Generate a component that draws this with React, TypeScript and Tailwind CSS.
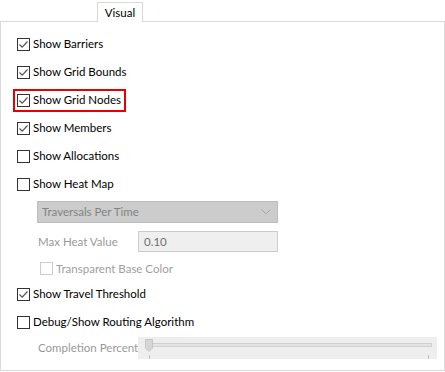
import type { ReactNode } from "react";

function Check({ checked, disabled }: { checked?: boolean; disabled?: boolean }) {
  return (
    <span
      className={`flex h-[13px] w-[13px] shrink-0 items-center justify-center border bg-white ${
        disabled ? "border-[#cccccc]" : "border-[#333333]"
      }`}
    >
      {checked && (
        <svg width="11" height="11" viewBox="0 0 11 11">
          <path d="M1.5 5.5 L4.2 8.2 L9.5 2.5" fill="none" stroke="#555555" strokeWidth="1.2" />
        </svg>
      )}
    </span>
  );
}

function CheckRow({
  label,
  checked,
  disabled,
  className = "",
}: {
  label: string;
  checked?: boolean;
  disabled?: boolean;
  className?: string;
}) {
  return (
    <div className={`flex items-center gap-[3px] ${className}`}>
      <Check checked={checked} disabled={disabled} />
      <span className={`whitespace-nowrap ${disabled ? "text-[#a0a0a0]" : "text-black"}`}>{label}</span>
    </div>
  );
}

function Row({ children, className = "" }: { children: ReactNode; className?: string }) {
  return <div className={`flex h-[28px] items-center ${className}`}>{children}</div>;
}

export default function App() {
  return (
    <div
      className="relative h-[372px] w-[445px] bg-white text-[11.5px] leading-none"
      style={{ fontFamily: 'Lato, "Noto Sans", sans-serif' }}
    >
      {/* tab strip */}
      <div className="flex h-[21px] items-end pl-[97px]">
        <div className="relative z-10 -mb-px flex h-[20px] w-[46px] items-center justify-center border border-b-0 border-[#d9d9d9] bg-white text-black">
          Visual
        </div>
      </div>

      <div className="h-[350px] border border-[#d9d9d9] pl-[16px] pr-[6px] pt-[8px]">
        <Row>
          <CheckRow label="Show Barriers" checked />
        </Row>
        <Row>
          <CheckRow label="Show Grid Bounds" checked />
        </Row>
        <Row>
          <div className="-ml-[4px] flex h-[23px] items-center border-2 border-[#e60000] pl-[2px] pr-[3px]">
            <CheckRow label="Show Grid Nodes" checked />
          </div>
        </Row>
        <Row>
          <CheckRow label="Show Members" checked />
        </Row>
        <Row>
          <CheckRow label="Show Allocations" />
        </Row>
        <Row>
          <CheckRow label="Show Heat Map" />
        </Row>

        <div className="ml-[20px] mt-[3px] flex h-[22px] w-[241px] items-center justify-between border border-[#bdbdbd] bg-[#cccccc] pl-[4px] pr-[6px] text-[#838383]">
          <span>Traversals Per Time</span>
          <svg width="10" height="6" viewBox="0 0 10 6">
            <path d="M0.5 0.5 L5 5 L9.5 0.5" fill="none" stroke="#a8a8a8" strokeWidth="1" />
          </svg>
        </div>

        <div className="ml-[21px] mt-[8px] flex h-[21px] items-center">
          <span className="w-[100px] whitespace-nowrap text-[#999999]">Max Heat Value</span>
          <div className="flex h-[21px] w-[140px] items-center border border-[#cccccc] bg-[#efefef] pl-[5px] text-[#6d6d6d]">
            0.10
          </div>
        </div>

        <div className="ml-[23px] mt-[10px] flex h-[13px] items-center">
          <CheckRow label="Transparent Base Color" disabled />
        </div>

        <Row className="mt-[5px] h-[24px]">
          <CheckRow label="Show Travel Threshold" checked />
        </Row>
        <Row>
          <CheckRow label="Debug/Show Routing Algorithm" />
        </Row>

        <div className="ml-[21px] mt-[1px] flex h-[22px] items-center">
          <span className="w-[100px] whitespace-nowrap text-[#999999]">Completion Percent</span>
          <div className="relative h-[22px] w-[299px] bg-[#eeeeee]">
            <div className="absolute left-[12px] top-[6px] h-[4px] w-[282px] border border-[#d0d0d0] bg-[#e4e4e4]" />
            <svg className="absolute left-[7px] top-[2px]" width="8" height="13" viewBox="0 0 8 13">
              <path d="M0.5 0.5 H7.5 V9 L4 12.5 L0.5 9 Z" fill="#d6d6d6" stroke="#c6c6c6" strokeWidth="1" />
            </svg>
            <div className="absolute left-[11px] top-[18px] h-[4px] w-px bg-[#c0c0c0]" />
            <div className="absolute left-[290px] top-[18px] h-[4px] w-px bg-[#c0c0c0]" />
          </div>
        </div>
      </div>
    </div>
  );
}
